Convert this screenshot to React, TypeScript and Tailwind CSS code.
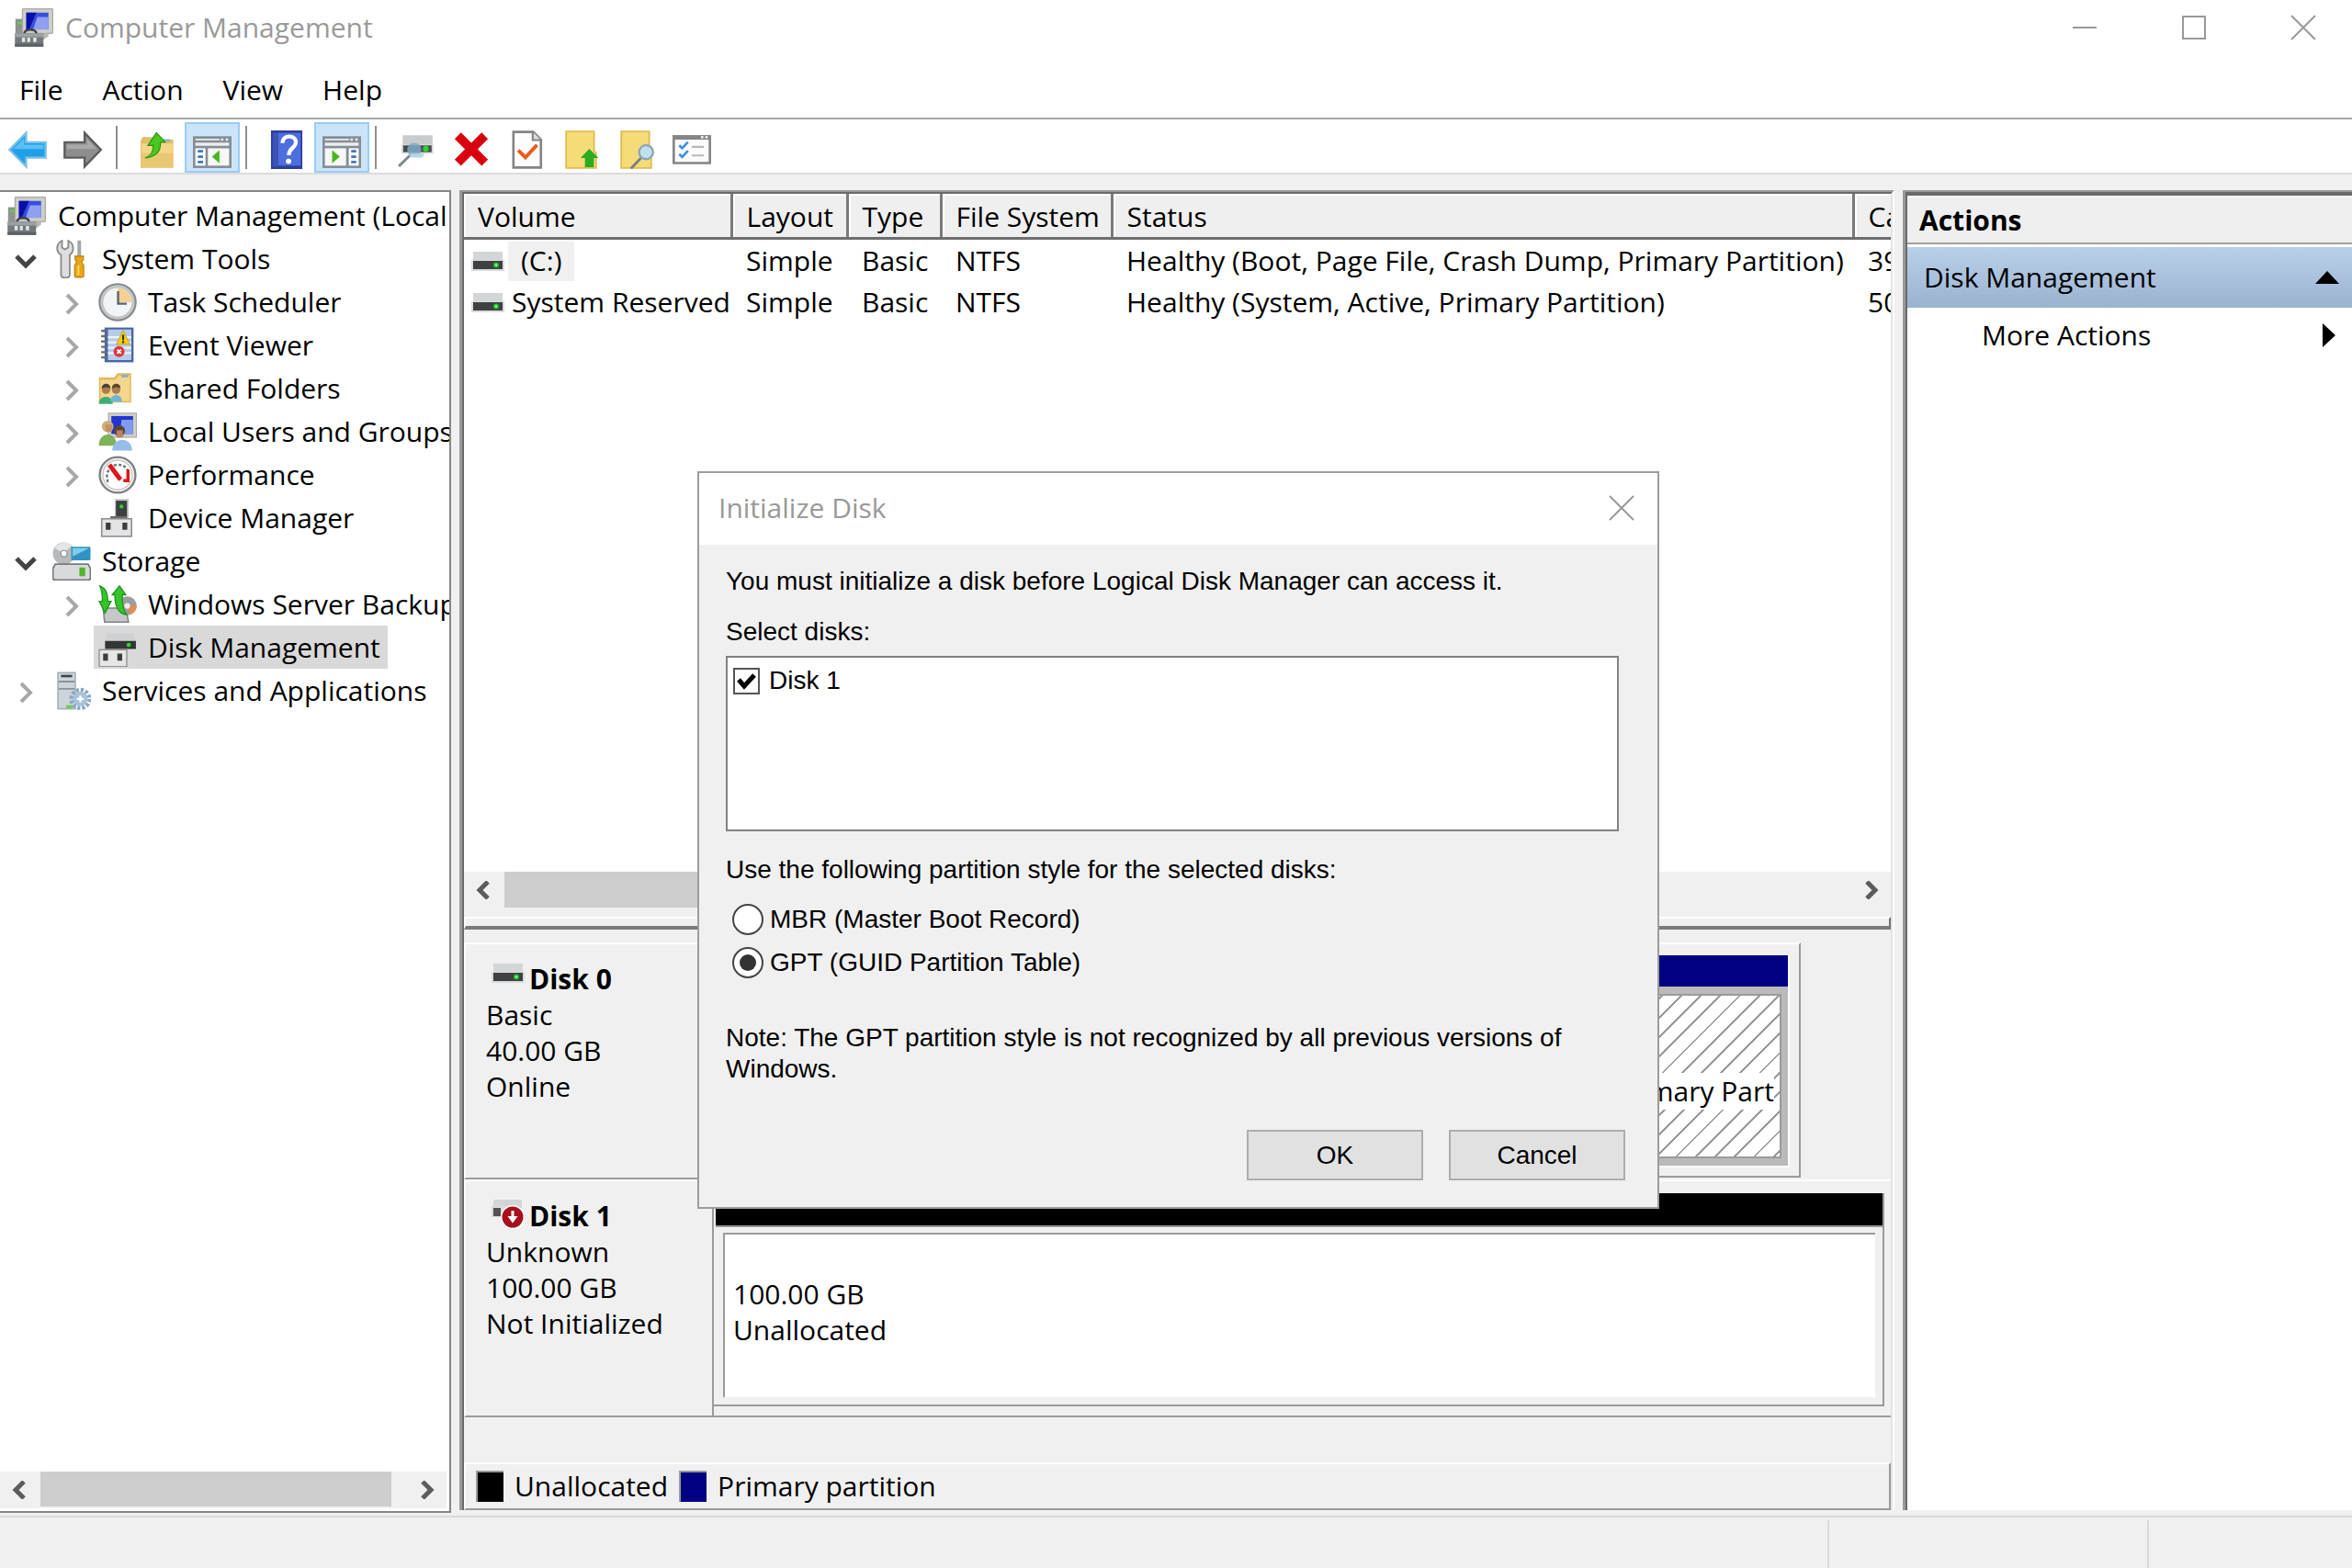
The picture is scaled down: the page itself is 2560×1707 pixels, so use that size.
import { useState } from 'react'
import type { ReactNode } from 'react'

type IconProps = { className?: string }

const Svg = (props: { className?: string; children: ReactNode }) => (
    <svg viewBox="0 0 16 16" className={props.className ?? 'h-[42px] w-[42px] shrink-0'} aria-hidden="true">
        {props.children}
    </svg>
)

const ComputerIcon = () => (
    <Svg>
        <rect x="0.3" y="4.4" width="4.5" height="7" fill="#8e9290" />
        <rect x="1.2" y="5.6" width="2" height="1" fill="#5fd23a" />
        <rect x="3.2" y="0.2" width="12.6" height="10.2" rx="0.5" fill="#cfcfc8" stroke="#a9a9a2" strokeWidth="0.5" />
        <rect x="4.8" y="1.8" width="9.2" height="7" fill="#3a4fe0" />
        <path d="M4.8 1.8h4.2L6 8.8H4.8z" fill="#0b0fa8" />
        <path d="M9.4 3.6H14v5.2H7.6z" fill="#8fa0f2" />
        <path d="M4 10.5c0-2.2 5-2.2 5 0" fill="none" stroke="#3d4144" strokeWidth="1" />
        <path d="M9 10.5h5v1.2l-2 1.3H9z" fill="#b9bab4" />
        <rect x="0.1" y="10.4" width="11.8" height="5.5" fill="#73797c" />
        <rect x="0.1" y="10.4" width="11.8" height="1.6" fill="#9aa0a3" />
        <path d="M3 12.2h1.3v1.8H3zM5.2 12.2h1.2v1.8H5.2zM7.7 12.2H9v1.8H7.7z" fill="#e4e6e6" />
        <rect x="0.1" y="14.7" width="11.8" height="1.2" fill="#5b6164" />
    </Svg>
)

const BackIcon = () => (
    <Svg>
        <path d="M0.5 8 7.4 1v3.9h8.1v6.4H7.4V15z" fill="#1f9fe6" stroke="#7cc0ea" strokeWidth="0.9" />
        <path d="M2 7.7 6.6 3v2.9h8v1.8z" fill="#5cc0f2" />
    </Svg>
)

const ForwardIcon = () => (
    <Svg>
        <path d="M15.6 8 8.8 1v3.9H0.5v6.4h8.3V15z" fill="#8d8d8d" stroke="#5c5c5c" strokeWidth="0.9" />
        <path d="M1.4 5.9h8.3V3.4L13.8 7.7H1.4z" fill="#a9a9a9" />
    </Svg>
)

const FolderUpIcon = () => (
    <Svg>
        <path d="M1.2 4.2 2 2.8h4.4l.6 1h7.7v11.7H1.2z" fill="#e3bd64" />
        <path d="M1.6 5.4h13v9.8h-13z" fill="#f4d68a" />
        <path d="M1.6 9.4h13v5.8h-13z" fill="#eac873" />
        <path d="M10 3.6h3.4v1H10z" fill="#8cb8c9" />
        <path d="M3 11.4c2.4-.8 3.4-2.2 3.4-5.2H4.2l3.5-5.2 3.6 3.8H9.4c.2 3.8-1.8 6.2-6.4 6.6z" fill="#49c81f" stroke="#2c9a12" strokeWidth="0.5" />
    </Svg>
)

const PaneIcon = (props: { side: 'left' | 'right' }) => (
    <Svg>
        <rect x="0" y="2.4" width="16" height="13.2" fill="#858d95" />
        <path d="M1 3.4h10v.7H1zM1 5h14v1.4H1z" fill="#e9edf0" />
        <path d="M11.6 3.3h1v1h-1zM13.6 3.3h1v1h-1z" fill="#e9edf0" />
        {props.side === 'left' ? (
            <>
                <rect x="1" y="7.4" width="4.2" height="7.2" fill="#fff" />
                <rect x="6.2" y="7.4" width="8.8" height="7.2" fill="#f7f7f5" />
                <path d="M2 8.6h2.2M2 10.9h2.2M2 13.1h2.2" stroke="#3e78b4" strokeWidth="1" />
                <path d="M11 8.2v5.4L7.9 10.9z" fill="#46b81e" />
            </>
        ) : (
            <>
                <rect x="1" y="7.4" width="8.8" height="7.2" fill="#f7f7f5" />
                <rect x="10.9" y="7.4" width="4.1" height="7.2" fill="#fff" />
                <path d="M11.9 8.6H14M11.9 10.9H14M11.9 13.1H14" stroke="#3e78b4" strokeWidth="1" />
                <path d="M4 8.2v5.4l3.2-2.7z" fill="#46b81e" />
            </>
        )}
    </Svg>
)

const HelpIcon = () => (
    <Svg>
        <rect x="1.5" y="0" width="13" height="16" fill="#2d3f9e" />
        <rect x="4.4" y="1" width="9.4" height="13.6" fill="#4d6fdd" />
        <rect x="2.2" y="1" width="2.2" height="14" fill="#3b52b8" />
        <path d="M6.3 5.2c0-3.6 5.5-3.5 5.5-.3 0 2.4-2.9 2.3-2.9 5.4" fill="none" stroke="#fff" strokeWidth="1.6" />
        <circle cx="8.8" cy="12.8" r="1.1" fill="#fff" />
    </Svg>
)

const DiskSearchIcon = () => (
    <Svg>
        <path d="M2.4 2h12.4v4.5H2.4z" fill="#c8cccd" />
        <path d="M1.8 5.8h13.4v3.8H1.8z" fill="#dcdedf" />
        <path d="M2.6 6.2h11.8V9H2.6z" fill="#474b4d" />
        <circle cx="12" cy="7.6" r="1.2" fill="#2fd22a" />
        <path d="M5.4 10.4.8 14.8" stroke="#7d878f" strokeWidth="1.1" />
        <circle cx="7.2" cy="8" r="2.9" fill="#7fa9c8" opacity="0.85" />
        <path d="M5.2 11.2h5.4l1-1.6H6z" fill="#b9d3e6" />
    </Svg>
)

const DeleteIcon = () => (
    <Svg>
        <path d="M2.4 2.2 13.6 13.4M13.6 2.2 2.4 13.4" stroke="#d8000f" strokeWidth="3.7" />
    </Svg>
)

const PageCheckIcon = () => (
    <Svg>
        <path d="M2.6.6h8.2L14 3.8v11.6H2.6z" fill="#fdfdfd" stroke="#848484" strokeWidth="1" />
        <path d="M10.6.6V4H14" fill="#ddd" stroke="#848484" strokeWidth="0.8" />
        <path d="m4.6 8.2 3 3L12.4 6" fill="none" stroke="#ea5b1c" strokeWidth="1.5" />
    </Svg>
)

const PageUpIcon = () => (
    <Svg>
        <path d="M1.6.4h11.6v8l.8 1v6.2H1.6z" fill="#f5dc78" stroke="#dfbd4c" strokeWidth="0.7" />
        <path d="M11.2 7.6 15 11.4h-1.9v3.8H9.4v-3.8H7.6z" fill="#2aac22" />
    </Svg>
)

const PageSearchIcon = () => (
    <Svg>
        <path d="M1.6.4h11.6v8l.8 1v6.2H1.6z" fill="#f5dc78" stroke="#dfbd4c" strokeWidth="0.7" />
        <path d="M9.8 11.4 5.6 15.8" stroke="#7b7f85" strokeWidth="1.1" />
        <circle cx="11.9" cy="9" r="2.9" fill="#bfe0ee" stroke="#8ea6b3" strokeWidth="0.9" />
    </Svg>
)

const ChecklistIcon = () => (
    <Svg>
        <path d="M.5 2.5h15v11H.5z" fill="#fbfbfb" stroke="#858585" strokeWidth="1" />
        <path d="M.1 2h15.8v1.8H.1z" fill="#858585" />
        <path d="M11.8 2.4h1v.8h-1zM13.6 2.4h1v.8h-1z" fill="#fff" />
        <path d="m2.8 6.2 1.2 1.2L6.4 4.8M2.8 9.8 4 11l2.4-2.6" fill="none" stroke="#3c8fe0" strokeWidth="1" />
        <path d="M8 6.8h5M8 10.4h5" stroke="#b8b8b8" strokeWidth="0.8" />
    </Svg>
)

const ToolsIcon = () => (
    <Svg>
        <path d="M2 3.6c0-1.5.8-2.6 2-3.2v2.8l1.2.8 1.4-.8V.4c1.2.6 2 1.7 2 3.2 0 1.1-.5 2-1.4 2.7v8.3c0 1.6-3.6 1.6-3.6 0V6.3C2.5 5.6 2 4.7 2 3.6z" fill="#dedede" stroke="#8b8b8b" strokeWidth="0.7" />
        <path d="M10.4.3h1.5V7h-1.5z" fill="#a5a5a5" />
        <path d="M9.4 6.8h3.5v1.4l-.8 1 .9 1.4v4.6c0 .5-3.8.5-3.8 0v-4.6l.9-1.4-.7-1z" fill="#e9a714" stroke="#b67c08" strokeWidth="0.4" />
        <path d="M10.4 10.6h.8v4h-.8z" fill="#f9d564" />
    </Svg>
)

const ClockIcon = () => (
    <Svg>
        <circle cx="8" cy="8" r="7.5" fill="#c3c6c7" stroke="#85898b" strokeWidth="0.8" />
        <circle cx="8" cy="8" r="5.9" fill="#f1f5f8" />
        <path d="M8 8V2.2A5.8 5.8 0 0 1 13.8 8z" fill="#f5cf93" />
        <path d="M8.2 3.4v5.2h3.6" fill="none" stroke="#55646e" strokeWidth="0.9" />
    </Svg>
)

const EventIcon = () => (
    <Svg>
        <rect x="2.6" y="0.6" width="12" height="14.4" fill="#4766a5" />
        <rect x="4" y="1.4" width="9.7" height="12.7" fill="#b9cbea" />
        <path d="M4 4.6h9.7M4 6.8h9.7M4 9h9.7M4 11.2h9.7" stroke="#eef3fb" strokeWidth="0.8" />
        <path d="M1.2 2h2.4M1.2 4.2h2.4M1.2 6.4h2.4M1.2 8.6h2.4M1.2 10.8h2.4M1.2 13h2.4" stroke="#6d6d6d" strokeWidth="0.9" />
        <path d="M10.3 1.8 13.2 7.6H7.4z" fill="#f2cf1d" stroke="#b99b0b" strokeWidth="0.3" />
        <path d="M10.3 3.6v2.2M10.3 6.2v.8" stroke="#3a3200" strokeWidth="0.8" />
        <circle cx="8.6" cy="10.6" r="2.3" fill="#d83a3f" />
        <path d="m7.8 9.8 1.6 1.6M9.4 9.8l-1.6 1.6" stroke="#fff" strokeWidth="0.7" />
    </Svg>
)

const SharedIcon = () => (
    <Svg>
        <path d="M.3 3.4h6.3L8 1.6h5.6v12.2H.3z" fill="#e2b85a" />
        <path d="M.9 4.4h6.3l1.2-1.8h4.6v10.6H.9z" fill="#f3d78d" />
        <path d="M9.6 2.2h2.8v1.2H9.6z" fill="#87aec2" />
        <circle cx="3.2" cy="8.4" r="1.8" fill="#b07a52" />
        <path d="M1.4 8c0-2.6 3.6-2.6 3.6-.2L3.2 7.4z" fill="#4a4038" />
        <path d="M.2 14.4c0-4 5.8-4 5.8 0z" fill="#3fae74" />
        <circle cx="7.4" cy="8.4" r="1.8" fill="#b07a52" />
        <path d="M5.6 8c0-2.6 3.6-2.6 3.6-.2l-1.8-.4z" fill="#5a4632" />
        <path d="M5 13.4c0-3.6 4.8-3.6 4.8 0z" fill="#6db7d6" />
    </Svg>
)

const UsersIcon = () => (
    <Svg>
        <rect x="4.2" y="0.3" width="11.6" height="10" fill="#cfcfc8" stroke="#a9a9a2" strokeWidth="0.4" />
        <rect x="5.4" y="1.5" width="9" height="7.4" fill="#2233cf" />
        <path d="M9.6 3h4.8v5.9H9z" fill="#7f9bf0" />
        <circle cx="3.9" cy="5.8" r="2.4" fill="#c9b27a" />
        <path d="M3 5h2.6v3H3z" fill="#c98f63" />
        <path d="M.2 13.8c0-6.2 7.4-6.2 7.4 0z" fill="#7fb35a" />
        <circle cx="8.8" cy="7.6" r="2.3" fill="#5b4636" />
        <path d="M7.6 7.4h2.6v3H7.6z" fill="#b98560" />
        <path d="M5.8 15.8c0-6 8.2-6 8.2 0z" fill="#94bde8" />
    </Svg>
)

const PerformanceIcon = () => (
    <Svg>
        <circle cx="8" cy="8" r="7.4" fill="#f4f4f4" stroke="#7e7e7e" strokeWidth="0.9" />
        <circle cx="8" cy="8" r="6.1" fill="#fff" stroke="#c6c6c6" strokeWidth="0.5" />
        <path d="M4 11C2.6 7 5 3.8 8 3.8s4 1.6 4.6 3.2" fill="none" stroke="#6a7a6a" strokeWidth="0.9" strokeDasharray="1.2 0.8" />
        <path d="M4.6 3.8 9.2 10" stroke="#e0141c" strokeWidth="1.9" />
        <path d="M12.3 5.8v4.6h-1.9" fill="none" stroke="#e0141c" strokeWidth="1.3" />
    </Svg>
)

const DeviceIcon = () => (
    <Svg>
        <path d="M6.8 0h5.8v8H6.8z" fill="#c7c9ca" />
        <path d="M7.3.8h4.6V8H7.3z" fill="#3d4041" />
        <circle cx="9.6" cy="3.2" r="0.8" fill="#35d12d" />
        <path d="M5 7.2h6.8v.9H5z" fill="#6b6b6b" />
        <rect x="1.4" y="8.3" width="12.4" height="7.3" fill="#e4e4e6" stroke="#8e8e8e" strokeWidth="0.6" />
        <path d="M3.1 9.9h2v3h-2zM10 9.9h2v3h-2z" fill="#3d3d3d" />
    </Svg>
)

const StorageIcon = () => (
    <Svg>
        <circle cx="4.8" cy="4.8" r="4.6" fill="#b7b9ba" />
        <path d="M4.8 4.8 1 2.6A4.6 4.6 0 0 1 8 1.4z" fill="#e3e5e6" />
        <circle cx="4.8" cy="4.8" r="1.3" fill="#fff" stroke="#8b8b8b" strokeWidth="0.4" />
        <rect x="7.8" y="2" width="8" height="5.6" rx="0.5" fill="#2f93c4" />
        <path d="M8.4 2.6h6.8L8.4 6z" fill="#7fcdea" />
        <path d="M1.2 9.2h13.6l1 1.8v3.8c0 .6-.4 1-1 1H1.2c-.6 0-1-.4-1-1V11z" fill="#d9dadd" stroke="#77797b" strokeWidth="0.7" />
        <rect x="11.2" y="10.6" width="2.4" height="3.6" fill="#52b52c" />
    </Svg>
)

const BackupIcon = () => (
    <Svg>
        <path d="M2 9.5h9.5l1 5.8H2.6z" fill="#c5c8c9" stroke="#7f8385" strokeWidth="0.6" />
        <circle cx="12" cy="8.6" r="3.9" fill="#9b9ea1" />
        <path d="M12 8.6h3.9a3.9 3.9 0 0 1-2.6 3.6z" fill="#e88a4c" />
        <circle cx="12" cy="8.6" r="1.2" fill="#eee" />
        <path d="M.6.3c2.6 1 3.3 3 3.3 6.4h1.4l-2.5 4.8L.4 6.7h1.3C1.7 4 1.5 2 .6.3z" fill="#35c52a" stroke="#1f941a" strokeWidth="0.5" />
        <path d="M8.8.3 11.4 4H10c-.2 3.4.2 6.4 1.8 8.2C8.3 12 6.8 8.6 6.9 4H5.8z" fill="#35c52a" stroke="#1f941a" strokeWidth="0.5" />
    </Svg>
)

const DiskMgmtIcon = () => (
    <Svg>
        <path d="M3.6 2h11.2l.8 3.2H2.8z" fill="#cfd2d3" />
        <path d="M2.8 5.2h12.8v3.4H2.8z" fill="#333637" />
        <circle cx="12.6" cy="6.9" r="0.9" fill="#35d12d" />
        <rect x="0.4" y="8.9" width="11.4" height="7" fill="#e6e6e8" stroke="#8e8e8e" strokeWidth="0.5" />
        <path d="M2 10.5h2v2.9H2zM7.9 10.5h2v2.9h-2z" fill="#3d3d3d" />
    </Svg>
)

const ServicesIcon = () => (
    <Svg>
        <path d="M2 .2h7.8v15.6H2z" fill="#a3b0b7" />
        <path d="M2.6.8h6.6v14.4H2.6z" fill="#ccd5d9" />
        <path d="M3.6 1.4h4.6v1H3.6z" fill="#3b4347" />
        <path d="M2.6 4.2h6.6M2.6 7.2h6.6" stroke="#87949b" strokeWidth="0.7" />
        <path d="M5.8 14h2.6v1.2H5.8z" fill="#69cf46" />
        <circle cx="11.6" cy="11.4" r="3.7" fill="none" stroke="#8aa7c4" strokeWidth="1.8" strokeDasharray="1.2 0.74" />
        <circle cx="11.6" cy="11.4" r="3" fill="#a9c2dc" />
        <path d="M11.6 10v2.8M10.2 11.4H13" stroke="#fff" strokeWidth="0.9" />
    </Svg>
)

const DriveIcon = ({ className }: IconProps) => (
    <svg viewBox="0 0 36 21" className={className ?? 'h-[21px] w-[36px] shrink-0'} aria-hidden="true">
        <path d="M2 0h32v9H2z" fill="#d3d6d7" />
        <path d="M0 9h36v12H0z" fill="#d9dbdc" />
        <path d="M2 10h32v9H2z" fill="#3e4142" />
        <circle cx="27" cy="14.5" r="3" fill="#1fbf2c" />
        <circle cx="27" cy="14.5" r="1.3" fill="#a6f59d" />
    </svg>
)

const DriveDownIcon = () => (
    <svg viewBox="0 0 36 34" className="h-[34px] w-[36px] shrink-0" aria-hidden="true">
        <path d="M2 2h31v9H2z" fill="#d3d6d7" />
        <path d="M0 9h16v12H0z" fill="#d9dbdc" />
        <path d="M2 11h8v9H2z" fill="#515354" />
        <circle cx="23" cy="21" r="13" fill="#fff" />
        <circle cx="23" cy="21" r="11.5" fill="#a80f1c" />
        <path d="M21.5 14h3v6h4L23 27.5 17.5 20h4z" fill="#fff" />
    </svg>
)

// ツリーの開閉矢印
const Twisty = (props: { state?: 'open' | 'closed' }) => (
    <svg viewBox="0 0 40 40" className="h-[40px] w-[40px] shrink-0" aria-hidden="true">
        {props.state === 'open' && <path d="m10 17 10 10 10-10" fill="none" stroke="#444" strokeWidth="5" />}
        {props.state === 'closed' && <path d="m15 12 10 10-10 10" fill="none" stroke="#a8a8a8" strokeWidth="4" />}
    </svg>
)

const ScrollArrow = (props: { dir: 'left' | 'right' }) => (
    <button className="flex w-[42px] items-center justify-center" aria-label={`Scroll ${props.dir}`}>
        <svg viewBox="0 0 20 20" className="h-[20px] w-[20px]" aria-hidden="true">
            <path d={props.dir === 'left' ? 'M15 1 6 10l9 9' : 'm5 1 9 9-9 9'} fill="none" stroke="#5c5c5c" strokeWidth="5" />
        </svg>
    </button>
)

type TreeNode = {
    label: string
    level: number
    icon: ReactNode
    state?: 'open' | 'closed'
    selected?: boolean
}

const tree: TreeNode[] = [
    { label: 'System Tools', level: 1, icon: <ToolsIcon />, state: 'open' },
    { label: 'Task Scheduler', level: 2, icon: <ClockIcon />, state: 'closed' },
    { label: 'Event Viewer', level: 2, icon: <EventIcon />, state: 'closed' },
    { label: 'Shared Folders', level: 2, icon: <SharedIcon />, state: 'closed' },
    { label: 'Local Users and Groups', level: 2, icon: <UsersIcon />, state: 'closed' },
    { label: 'Performance', level: 2, icon: <PerformanceIcon />, state: 'closed' },
    { label: 'Device Manager', level: 2, icon: <DeviceIcon /> },
    { label: 'Storage', level: 1, icon: <StorageIcon />, state: 'open' },
    { label: 'Windows Server Backup', level: 2, icon: <BackupIcon />, state: 'closed' },
    { label: 'Disk Management', level: 2, icon: <DiskMgmtIcon />, selected: true },
    { label: 'Services and Applications', level: 1, icon: <ServicesIcon />, state: 'closed' },
]

const volumes = [
    { name: '(C:)', status: 'Healthy (Boot, Page File, Crash Dump, Primary Partition)', capacity: '39', focused: true },
    { name: 'System Reserved', status: 'Healthy (System, Active, Primary Partition)', capacity: '50', focused: false },
]

const TitleBar = () => (
    <header className="flex h-[60px] items-center justify-between bg-white pr-[39px] pl-[16px] text-[#999]">
        <div className="flex items-center gap-[13px]">
            <ComputerIcon />
            <h1>Computer Management</h1>
        </div>
        <div className="flex gap-[91px]">
            <button aria-label="Minimize">
                <svg viewBox="0 0 28 28" className="h-[28px] w-[28px]"><path d="M1 14h26" stroke="#999" strokeWidth="2" /></svg>
            </button>
            <button aria-label="Maximize">
                <svg viewBox="0 0 28 28" className="h-[28px] w-[28px]"><path d="M2 2h24v24H2z" fill="none" stroke="#999" strokeWidth="2" /></svg>
            </button>
            <button aria-label="Close">
                <svg viewBox="0 0 28 28" className="h-[28px] w-[28px]"><path d="m1 1 26 26M27 1 1 27" stroke="#999" strokeWidth="2" /></svg>
            </button>
        </div>
    </header>
)

const ToolButton = (props: { label: string; active?: boolean; children: ReactNode }) => (
    <button
        aria-label={props.label}
        className={
            props.active
                ? 'flex h-[55px] w-[60px] items-center justify-center border-2 border-[#99cdf7] bg-[#cce4f9] pt-1'
                : 'flex h-[55px] w-[60px] items-center justify-center pt-1'
        }
    >
        {props.children}
    </button>
)

const Separator = () => (
    <div className="flex h-[55px] w-[21px] items-center pl-[6px]">
        <div className="h-[47px] w-[2px] bg-[#8f8f8f]" />
    </div>
)

const Toolbar = () => (
    <div className="flex h-[62px] items-end border-t-2 border-b-2 border-t-[#a5a5a5] border-b-[#dcdcdc] bg-white">
        <ToolButton label="Back"><BackIcon /></ToolButton>
        <ToolButton label="Forward"><ForwardIcon /></ToolButton>
        <Separator />
        <ToolButton label="Up one level"><FolderUpIcon /></ToolButton>
        <ToolButton label="Show console tree" active><PaneIcon side="left" /></ToolButton>
        <Separator />
        <ToolButton label="Help"><HelpIcon /></ToolButton>
        <ToolButton label="Show action pane" active><PaneIcon side="right" /></ToolButton>
        <Separator />
        <ToolButton label="Rescan"><DiskSearchIcon /></ToolButton>
        <ToolButton label="Delete"><DeleteIcon /></ToolButton>
        <ToolButton label="Properties"><PageCheckIcon /></ToolButton>
        <ToolButton label="Open"><PageUpIcon /></ToolButton>
        <ToolButton label="Explore"><PageSearchIcon /></ToolButton>
        <ToolButton label="Settings"><ChecklistIcon /></ToolButton>
    </div>
)

const ConsoleTree = () => (
    <nav className="flex w-[491px] shrink-0 flex-col overflow-hidden border-t-2 border-r-2 border-b-2 border-[#868686] bg-white pt-[2px]">
        <div className="flex h-[47px] items-center gap-[13px] pl-[8px] whitespace-nowrap">
            <ComputerIcon />
            Computer Management (Local
        </div>
        <ul className="flex-1">
            {tree.map((node) => (
                <li
                    key={node.label}
                    className={node.level === 1 ? 'flex h-[47px] items-center pl-[8px]' : 'flex h-[47px] items-center pl-[58px]'}
                >
                    <Twisty state={node.state} />
                    <span
                        className={
                            node.selected
                                ? 'ml-[4px] flex h-full items-center gap-[12px] bg-[#d9d9d9] pr-[8px] pl-[5px] whitespace-nowrap'
                                : 'flex h-full items-center gap-[12px] pl-[9px] whitespace-nowrap'
                        }
                    >
                        {node.icon}
                        {node.label}
                    </span>
                </li>
            ))}
        </ul>
        <div className="mr-[3px] mb-[3px] flex h-[40px] bg-[#f0f0f0]">
            <ScrollArrow dir="left" />
            <div className="flex-1 pl-[2px]"><div className="h-[38px] w-[382px] bg-[#cdcdcd]" /></div>
            <ScrollArrow dir="right" />
        </div>
    </nav>
)

const VolumeList = () => (
    <div className="flex-1 overflow-hidden bg-white">
        <table className="w-full table-fixed border-collapse text-left whitespace-nowrap">
            <colgroup>
                <col className="w-[291px]" />
                <col className="w-[126px]" />
                <col className="w-[102px]" />
                <col className="w-[186px]" />
                <col className="w-[807px]" />
                <col />
            </colgroup>
            <thead>
                <tr className="h-[48px]">
                    {['Volume', 'Layout', 'Type', 'File System', 'Status', 'Ca'].map((title) => (
                        <th
                            key={title}
                            className="overflow-hidden border-r-3 border-b-3 border-r-[#7a7a7a] border-b-[#6e6e6e] bg-[#efefef] p-0 pt-[4px] pl-[15px] font-normal shadow-[inset_2px_2px_0_#fff] last:border-r-0"
                        >
                            {title}
                        </th>
                    ))}
                </tr>
            </thead>
            <tbody>
                {volumes.map((volume) => (
                    <tr key={volume.name} className="h-[45px]">
                        <td className="p-0 pt-[2px] pl-[8px]">
                            <div className="flex items-center gap-[4px]">
                                <DriveIcon />
                                {volume.focused
                                    ? <span className="h-[43px] bg-[#f0f0f0] px-[14px]">{volume.name}</span>
                                    : <span className="px-[4px]">{volume.name}</span>}
                            </div>
                        </td>
                        <td className="p-0 pt-[2px] pl-[16px]">Simple</td>
                        <td className="p-0 pt-[2px] pl-[16px]">Basic</td>
                        <td className="p-0 pt-[2px] pl-[16px]">NTFS</td>
                        <td className="p-0 pt-[2px] pl-[16px]">{volume.status}</td>
                        <td className="overflow-hidden p-0 pt-[2px] pl-[16px]">{volume.capacity}</td>
                    </tr>
                ))}
            </tbody>
        </table>
    </div>
)

const DiskCell = (props: { icon: ReactNode; name: string; lines: string[] }) => (
    <div className="w-[272px] shrink-0 border-2 border-white border-r-[#9a9a9a] border-b-[#9a9a9a] pt-[18px] pl-[22px] leading-[39px]">
        <div className="flex h-[39px] items-start gap-[5px] pl-[6px] font-bold">
            {props.icon}
            {props.name}
        </div>
        {props.lines.map((line) => <div key={line}>{line}</div>)}
    </div>
)

const DiskMap = () => (
    <div className="pt-[14px] pb-[49px]">
        <div className="flex h-[258px]">
            <DiskCell icon={<DriveIcon className="mt-[3px] h-[21px] w-[36px] shrink-0" />} name="Disk 0" lines={['Basic', '40.00 GB', 'Online']} />
            <div className="mr-[98px] mb-[2px] flex-1 border-2 border-[#f0f0f0] border-t-white border-r-[#9a9a9a] border-b-[#9a9a9a] pt-[12px] pr-[10px] pb-[9px]">
                <div className="flex h-full flex-col border-r-2 border-b-2 border-white">
                    <div className="h-[34px] bg-[#000080]" />
                    <div className="flex-1 bg-[#bababa] p-[8px] pr-[7px]">
                        <div className="h-full border-2 border-[#9a9a9a] bg-[repeating-linear-gradient(135deg,#9a9a9a_0_2px,#fff_2px_15px)] pt-[84px] pr-[6px]">
                            <div className="h-[40px] bg-white text-right leading-[40px]">mary Part</div>
                        </div>
                    </div>
                </div>
            </div>
        </div>
        <div className="flex h-[259px]">
            <DiskCell icon={<DriveDownIcon />} name="Disk 1" lines={['Unknown', '100.00 GB', 'Not Initialized']} />
            <div className="flex-1 border-t-2 border-b-2 border-t-white border-b-[#9a9a9a] pt-[13px] pr-[7px] pb-[10px]">
                <div className="flex h-full flex-col border-r-2 border-b-2 border-[#9a9a9a] pl-[2px]">
                    <div className="h-[35px] bg-black" />
                    <div className="h-[2px] bg-[#9a9a9a]" />
                    <div className="mx-[8px] mt-[6px] mb-[8px] flex-1 border-t-2 border-l-2 border-[#9a9a9a] bg-white pt-[45px] pl-[9px] leading-[39px]">
                        <div>100.00 GB</div>
                        <div>Unallocated</div>
                    </div>
                </div>
            </div>
        </div>
    </div>
)

const Legend = () => (
    <div className="flex h-[52px] items-center border-2 border-white border-r-[#9a9a9a] border-b-[#9a9a9a] pl-[11px]">
        <div className="h-[34px] w-[30px] border-t-2 border-l-2 border-[#9a9a9a] bg-black" />
        <div className="ml-[12px]">Unallocated</div>
        <div className="ml-[12px] h-[34px] w-[30px] border-t-2 border-l-2 border-[#9a9a9a] bg-[#000080]" />
        <div className="ml-[12px]">Primary partition</div>
    </div>
)

const DiskPane = () => (
    <main className="mb-[3px] ml-[9px] flex min-w-0 flex-1 flex-col border-t-2 border-r-2 border-l-3 border-[#9a9a9a] border-r-white">
        <div className="flex flex-1 flex-col border-t-2 border-r-2 border-l-2 border-[#6a6a6a] border-r-[#e3e3e3]">
            <VolumeList />
            <div className="flex h-[39px] bg-[#f0f0f0]">
                <ScrollArrow dir="left" />
                <div className="flex-1 pl-[2px]"><div className="h-full w-[1100px] bg-[#cdcdcd]" /></div>
                <ScrollArrow dir="right" />
            </div>
            <div className="mt-[10px] h-[14px] border-2 border-b-4 border-white border-r-[#6e6e6e] border-b-[#7a7a7a]" />
            <DiskMap />
            <Legend />
        </div>
    </main>
)

const ActionsPane = () => (
    <aside className="mb-[3px] ml-[9px] w-[489px] shrink-0 border-t-2 border-l-3 border-[#9a9a9a]">
        <div className="h-full border-t-4 border-l-2 border-[#6a6a6a] bg-white">
            <h2 className="h-[53px] border-t-2 border-b-2 border-t-white border-b-[#a0a0a0] bg-[#efefef] pl-[13px] leading-[50px] font-bold">Actions</h2>
            <div className="mt-[3px] flex h-[66px] items-center justify-between bg-linear-to-b from-[#bad0e9] to-[#9bb2d0] pr-[14px] pl-[18px]">
                Disk Management
                <svg viewBox="0 0 26 14" className="h-[14px] w-[26px]" aria-hidden="true"><path d="M13 0 26 14H0z" /></svg>
            </div>
            <button className="flex h-[60px] w-full items-center justify-between pr-[18px] pl-[81px]">
                More Actions
                <svg viewBox="0 0 14 26" className="h-[26px] w-[14px]" aria-hidden="true"><path d="M0 0 14 13 0 26z" /></svg>
            </button>
        </div>
    </aside>
)

const InitializeDialog = () => {
    const [checked, setChecked] = useState(true)
    const [style, setStyle] = useState('gpt')
    const radioClass =
        'flex h-[34px] w-[34px] appearance-none items-center justify-center rounded-full border-2 border-[#444] bg-white checked:before:h-[18px] checked:before:w-[18px] checked:before:rounded-full checked:before:bg-[#333]'

    return (
        <div
            role="dialog"
            aria-label="Initialize Disk"
            className="absolute top-[513px] left-[759px] w-[1047px] border-2 border-[#9c9c9c] bg-[#f0f0f0] font-['Liberation_Sans',sans-serif] text-[28px] leading-[34px]"
        >
            <div className="flex h-[78px] items-center justify-between bg-white pr-[25px] pb-[2px] pl-[21px] text-[#999]">
                <span className="font-['Open_Sans',sans-serif] text-[30px]">Initialize Disk</span>
                <button aria-label="Close dialog">
                    <svg viewBox="0 0 28 28" className="h-[28px] w-[28px]"><path d="m1 1 26 26M27 1 1 27" stroke="#999" strokeWidth="2" /></svg>
                </button>
            </div>
            <div className="pt-[23px] pr-[35px] pb-[29px] pl-[29px]">
                <p>You must initialize a disk before Logical Disk Manager can access it.</p>
                <p className="mt-[21px]">Select disks:</p>
                <div className="mt-[9px] mr-[7px] h-[191px] border-2 border-[#828282] bg-white pt-[8px] pl-[6px]">
                    <label className="relative flex items-center gap-[10px]">
                        <input
                            type="checkbox"
                            checked={checked}
                            onChange={() => setChecked(!checked)}
                            className="peer h-[29px] w-[29px] appearance-none border-2 border-[#555] bg-white"
                        />
                        <svg viewBox="0 0 29 29" className="absolute left-0 hidden h-[29px] w-[29px] peer-checked:block" aria-hidden="true">
                            <path d="m6 13 6 7L23 8" fill="none" stroke="#000" strokeWidth="5" />
                        </svg>
                        Disk 1
                    </label>
                </div>
                <fieldset>
                    <legend className="pt-[25px]">Use the following partition style for the selected disks:</legend>
                    <label className="mt-[20px] flex items-center gap-[7px] pl-[7px]">
                        <input type="radio" name="style" checked={style === 'mbr'} onChange={() => setStyle('mbr')} className={radioClass} />
                        MBR (Master Boot Record)
                    </label>
                    <label className="mt-[13px] flex items-center gap-[7px] pl-[7px]">
                        <input type="radio" name="style" checked={style === 'gpt'} onChange={() => setStyle('gpt')} className={radioClass} />
                        GPT (GUID Partition Table)
                    </label>
                </fieldset>
                <p className="mt-[48px] w-[920px]">Note: The GPT partition style is not recognized by all previous versions of Windows.</p>
                <div className="mt-[49px] flex justify-end gap-[28px]">
                    <button className="h-[55px] w-[192px] border-2 border-[#adadad] bg-[#e1e1e1]">OK</button>
                    <button className="h-[55px] w-[192px] border-2 border-[#adadad] bg-[#e1e1e1]">Cancel</button>
                </div>
            </div>
        </div>
    )
}

export default function App() {
    return (
        <div className="relative flex min-h-screen flex-col overflow-hidden bg-[#f0f0f0] font-['Open_Sans',sans-serif] text-[30px] leading-[42px] text-black">
            <TitleBar />
            <div className="flex h-[68px] items-center gap-[43px] bg-white pt-[8px] pl-[21px]">
                {['File', 'Action', 'View', 'Help'].map((item) => <button key={item}>{item}</button>)}
            </div>
            <Toolbar />
            <div className="flex flex-1 items-stretch pt-[17px] pb-[3px]">
                <ConsoleTree />
                <DiskPane />
                <ActionsPane />
            </div>
            <footer className="flex h-[57px] border-t-2 border-[#d9d9d9] pt-[3px]">
                <div className="flex-1 border-r-2 border-[#d9d9d9]" />
                <div className="w-[348px] border-r-2 border-[#d9d9d9]" />
                <div className="w-[221px]" />
            </footer>
            <InitializeDialog />
        </div>
    )
}
